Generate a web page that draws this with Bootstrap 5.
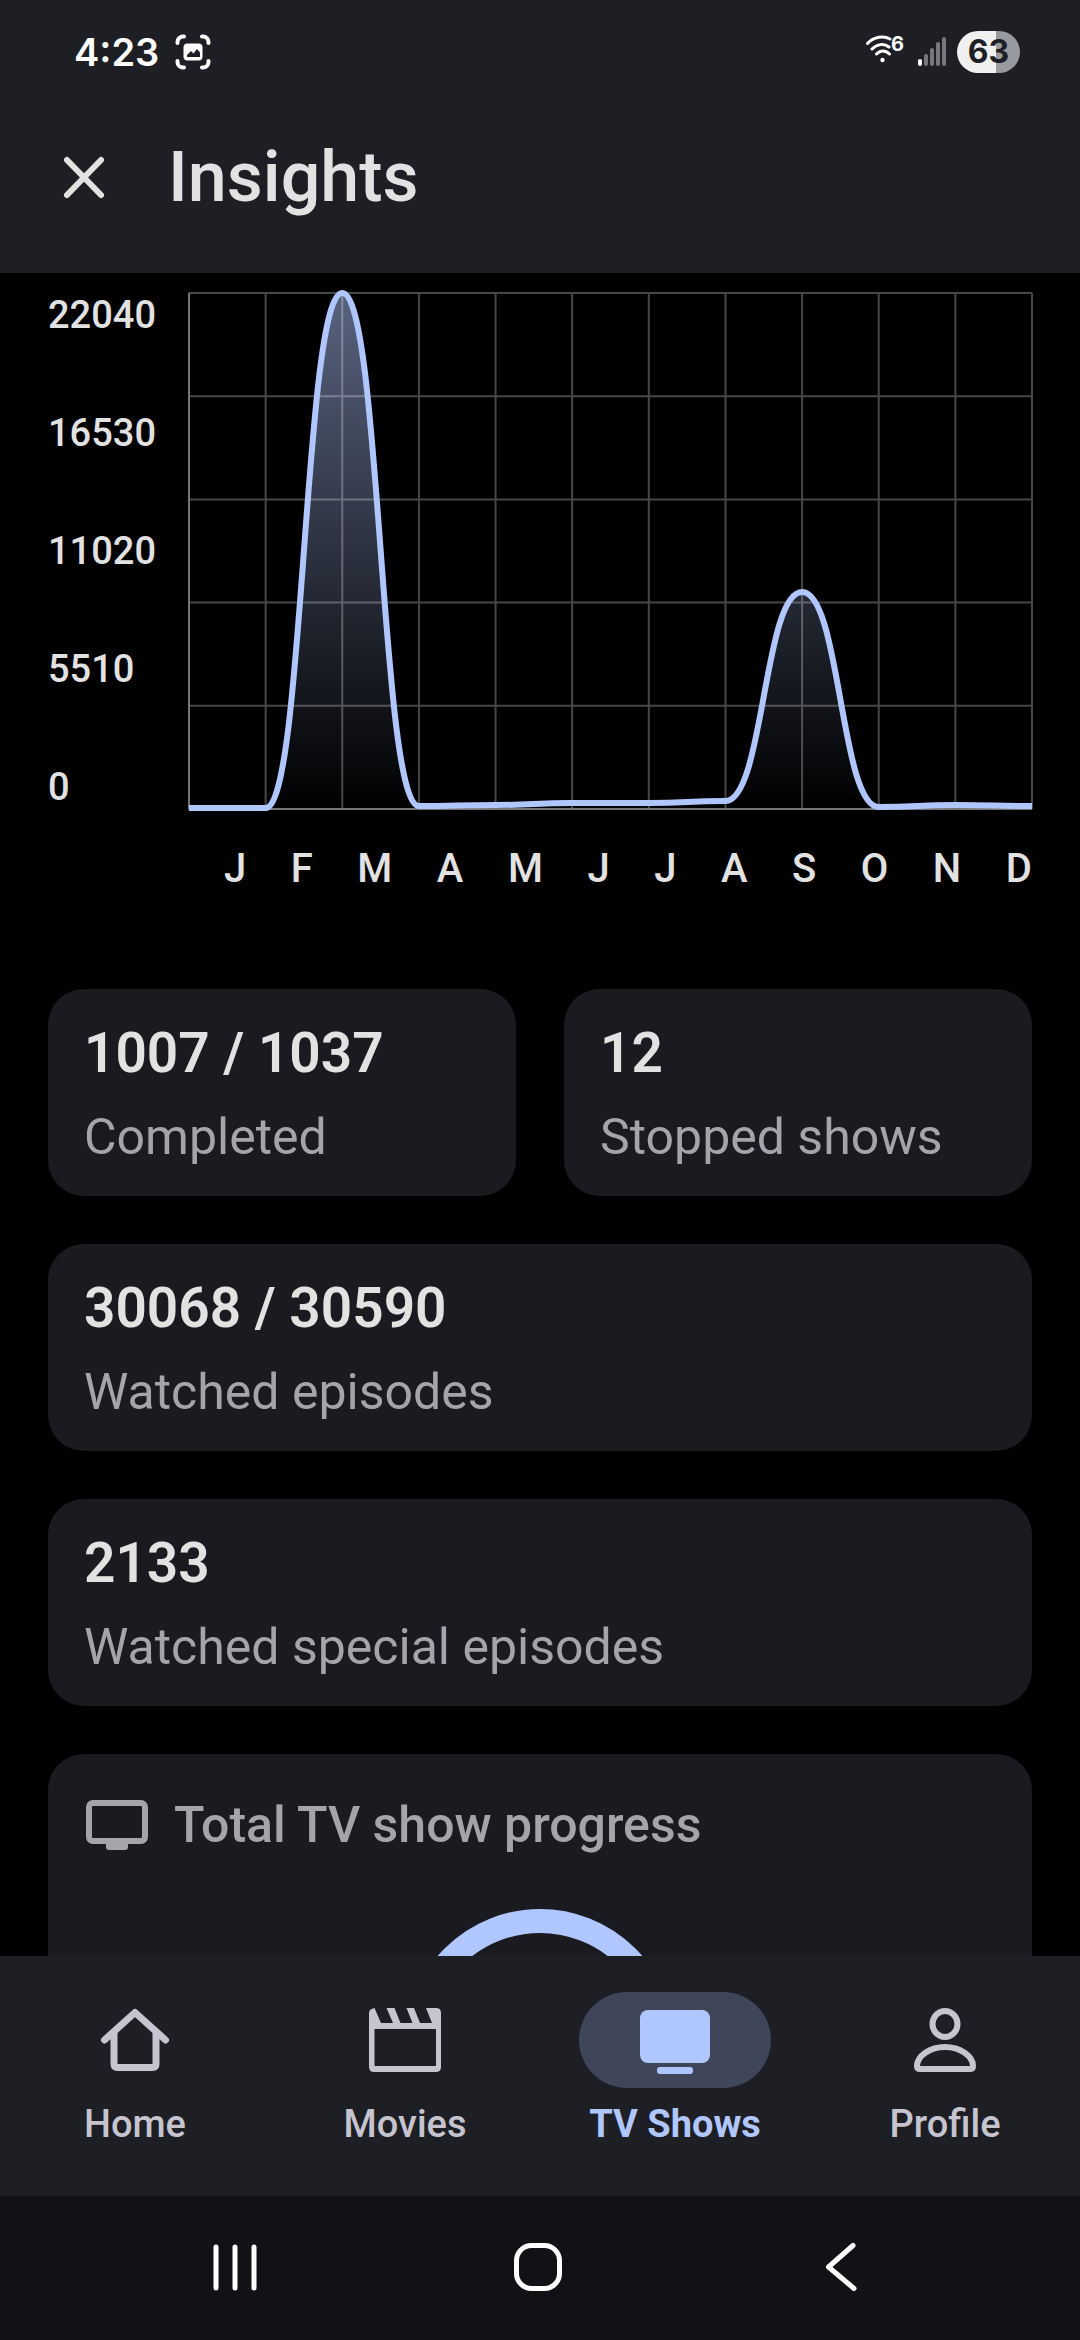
<!DOCTYPE html>
<html lang="en">
<head>
<meta charset="utf-8">
<meta name="viewport" content="width=device-width, initial-scale=1">
<title>Insights</title>
<link href="https://cdn.jsdelivr.net/npm/bootstrap@5.3.0/dist/css/bootstrap.min.css" rel="stylesheet">
<style>
  :root { --accent: #b0c6ff; --bar: #1e1f25; --panel: #1a1b20; --ink: #e2e2e2; --soft: #a4a4ab; --idle: #c5c4cf; }
  body { font-family: Roboto, "Noto Sans", sans-serif; background: #000; color: var(--ink); height: 100vh; }
  svg { display: block; flex: none; }
  .top-area { background: var(--bar); padding-bottom: 24px; }
  .status-row { height: 104px; padding: 0 60px 0 74px; color: #fff; font-family: Inter, sans-serif; }
  .clock { font-size: 38px; line-height: 44px; font-weight: 600; }
  .battery { width: 63px; height: 42px; border-radius: 21px; background: linear-gradient(90deg, #f0f0f1 62%, #999a9e 62%); color: #1e1f25; font-size: 32px; font-weight: 700; }
  .tool-row { height: 145px; padding: 0 54px; gap: 54px; }
  .close-btn { color: var(--ink); line-height: 0; }
  .page-title { font-size: 70px; line-height: 84px; font-weight: 500; }
  .scroll-area { min-height: 0; padding: 20px 48px 0; }
  .chart-row { height: 516px; }
  .y-axis { width: 141px; font-size: 38px; line-height: 44px; font-weight: 500; }
  .plot { flex: 1 1 0; min-width: 0; height: 100%; overflow: visible; }
  .x-axis { margin: 36px 0 96px 141px; padding-left: 35px; font-size: 40px; line-height: 48px; font-weight: 500; }
  .stat-grid { --bs-gutter-x: 48px; --bs-gutter-y: 48px; }
  .panel { background: var(--panel); border: 0; border-radius: 36px; color: var(--ink); }
  .stat-panel { padding: 28px 36px 23px; gap: 12px; }
  .stat-value { font-size: 55px; line-height: 72px; font-weight: 600; }
  .stat-label { font-size: 50px; line-height: 72px; color: var(--soft); }
  .ring-panel { padding: 35px 36px; gap: 48px; min-height: 480px; }
  .ring-head { font-size: 50px; line-height: 72px; font-weight: 500; color: var(--soft); gap: 24px; }
  .tab-bar { background: var(--bar); height: 240px; padding-top: 36px; }
  .tab-link { color: var(--idle); font-size: 38px; line-height: 44px; font-weight: 500; gap: 14px; text-decoration: none; }
  .tab-link .pill { width: 192px; height: 96px; border-radius: 48px; }
  .tab-link.active { color: var(--accent); font-weight: 700; }
  .tab-link.active .pill { background: #40465a; }
  .system-bar { background: #111216; height: 144px; padding: 0 88px 0 84px; }
  .system-bar .btn { color: #fff; }
</style>
<script src="https://cdn.jsdelivr.net/npm/bootstrap@5.3.0/dist/js/bootstrap.bundle.min.js"></script>
</head>
<body class="d-flex flex-column overflow-hidden">

<header class="top-area flex-shrink-0">
  <div class="status-row d-flex align-items-center justify-content-between">
    <div class="d-flex align-items-center gap-3">
      <span class="clock">4:23</span>
      <svg width="36" height="36" viewBox="0 0 36 36" fill="none" stroke="#fff" stroke-width="4" stroke-linecap="round">
        <path d="M2.500 9V8A5.500 5.500 0 0 1 8 2.500H9M27 2.500h1A5.500 5.500 0 0 1 33.500 8v1M33.500 27v1a5.500 5.500 0 0 1-5.500 5.500h-1M9 33.500H8A5.500 5.500 0 0 1 2.500 28v-1"/>
        <rect x="8.500" y="9.500" width="19" height="17" rx="4" fill="#fff" stroke="none"/>
        <path d="M12 23v-2l4-4 2.500 2.500 3.500-4.500 3 3.500V23z" fill="#1e1f25" stroke="none"/>
      </svg>
    </div>
    <div class="d-flex align-items-center">
      <svg width="91" height="42" viewBox="0 0 91 42" fill="none" stroke="#fff" stroke-width="3" stroke-linecap="round">
        <path d="M1.500 12.500C8 5.500 18 4.500 24 8M6 18c5-5 12-6 17-2M10.500 23c4-4 9-4 13 0"/>
        <circle cx="16.500" cy="29" r="2.200" fill="#fff" stroke="none"/>
        <text x="25" y="20" fill="#fff" stroke="none" font-size="20" font-weight="700" font-family="Inter, sans-serif">6</text>
        <g stroke-width="4"><path d="M54 30v3"/><path d="M60 25v8M66 19v14M72 13v20M78 8v25" stroke="#77787c"/></g>
      </svg>
      <span class="battery d-flex align-items-center justify-content-center">63</span>
    </div>
  </div>
  <div class="tool-row d-flex align-items-center">
    <button type="button" class="btn close-btn border-0 p-0" aria-label="Close">
      <svg width="60" height="60" viewBox="0 0 60 60" stroke="currentColor" stroke-width="6" stroke-linecap="round"><path d="M13 13l34 35M47 13L13 48"/></svg>
    </button>
    <h1 class="page-title mb-0">Insights</h1>
  </div>
</header>

<main class="scroll-area flex-fill overflow-hidden">
  <section aria-label="Episodes per month">
    <div class="chart-row d-flex">
      <div class="y-axis d-flex flex-column justify-content-between">
        <span>22040</span><span>16530</span><span>11020</span><span>5510</span><span>0</span>
      </div>
      <svg class="plot" viewBox="0 0 843 516" preserveAspectRatio="none" fill="none">
        <defs>
          <linearGradient id="fade" gradientUnits="userSpaceOnUse" x1="0" y1="0" x2="0" y2="516">
            <stop offset="0" stop-color="#b0c6ff" stop-opacity=".5"/><stop offset="1" stop-color="#b0c6ff" stop-opacity="0"/>
          </linearGradient>
        </defs>
        <path id="area" fill="url(#fade)"/>
        <path id="grid" stroke="#fff" stroke-opacity=".28" stroke-width="2"/>
        <path d="M0 0V516H843" stroke="#fff" stroke-opacity=".25" stroke-width="2"/>
        <path id="curve" stroke="#b0c6ff" stroke-width="6" stroke-linejoin="round"/>
      </svg>
    </div>
    <div class="x-axis d-flex justify-content-between">
      <span>J</span><span>F</span><span>M</span><span>A</span><span>M</span><span>J</span><span>J</span><span>A</span><span>S</span><span>O</span><span>N</span><span>D</span>
    </div>
  </section>

  <section class="row stat-grid mt-0">
    <div class="col-6 mt-0"><div class="card panel stat-panel"><div class="stat-value">1007 / 1037</div><div class="stat-label">Completed</div></div></div>
    <div class="col-6 mt-0"><div class="card panel stat-panel"><div class="stat-value">12</div><div class="stat-label">Stopped shows</div></div></div>
    <div class="col-12"><div class="card panel stat-panel"><div class="stat-value">30068 / 30590</div><div class="stat-label">Watched episodes</div></div></div>
    <div class="col-12"><div class="card panel stat-panel"><div class="stat-value">2133</div><div class="stat-label">Watched special episodes</div></div></div>
    <div class="col-12">
      <div class="card panel ring-panel">
        <div class="ring-head d-flex align-items-center">
          <svg width="66" height="54" viewBox="0 0 66 54"><rect x="5" y="5" width="56" height="38" rx="4" fill="none" stroke="currentColor" stroke-width="6"/><path d="M22 45h22v4q0 3-3 3H25q-3 0-3-3z" fill="currentColor"/></svg>
          <span>Total TV show progress</span>
        </div>
        <svg class="mx-auto" width="270" height="270" viewBox="0 0 270 270"><circle cx="135" cy="135" r="123" fill="none" stroke="#b0c6ff" stroke-width="24"/></svg>
      </div>
    </div>
  </section>
</main>

<nav class="tab-bar d-flex align-items-start flex-shrink-0">
  <a href="#" class="tab-link d-flex flex-column align-items-center w-25">
    <span class="pill d-flex align-items-center justify-content-center">
      <svg width="96" height="96" viewBox="0 0 96 96" fill="none" stroke="currentColor" stroke-width="7" stroke-linejoin="round" stroke-linecap="round"><path d="M17.500 48L48 20.500 78.500 48"/><path d="M27 41v31q0 3.500 3.500 3.500h35q3.500 0 3.500-3.500V41"/></svg>
    </span>Home</a>
  <a href="#" class="tab-link d-flex flex-column align-items-center w-25">
    <span class="pill d-flex align-items-center justify-content-center">
      <svg width="96" height="96" viewBox="0 0 96 96" fill="currentColor" fill-rule="evenodd"><path d="M17.500 16L24 31H36L29.500 16H37.500L43.500 31H55.500L49.500 16H57L63 31H75L69 16H79Q84 16 84 21V75Q84 80 79 80H17Q12 80 12 75V21Q12 17 17.500 16ZM17.500 37V74H79V37Z"/></svg>
    </span>Movies</a>
  <a href="#" class="tab-link active d-flex flex-column align-items-center w-25" aria-current="page">
    <span class="pill d-flex align-items-center justify-content-center">
      <svg width="96" height="96" viewBox="0 0 96 96" fill="currentColor"><rect x="13" y="18" width="70" height="53" rx="8"/><rect x="30" y="75" width="36" height="7" rx="3"/></svg>
    </span>TV Shows</a>
  <a href="#" class="tab-link d-flex flex-column align-items-center w-25">
    <span class="pill d-flex align-items-center justify-content-center">
      <svg width="96" height="96" viewBox="0 0 96 96" fill="none" stroke="currentColor" stroke-width="6"><ellipse cx="48" cy="32" rx="12.500" ry="13"/><path d="M20 74C20 64 33 55 48 55S76 64 76 74Q76 77 73 77H23Q20 77 20 74Z"/></svg>
    </span>Profile</a>
</nav>

<footer class="system-bar d-flex align-items-center flex-shrink-0">
  <button type="button" class="btn border-0 p-0 flex-fill d-flex justify-content-center" aria-label="Recent apps">
    <svg width="60" height="60" viewBox="0 0 60 60" stroke="currentColor" stroke-width="5" stroke-linecap="round"><path d="M11 9v41M30 9v41M49 9v41"/></svg></button>
  <button type="button" class="btn border-0 p-0 flex-fill d-flex justify-content-center" aria-label="Home">
    <svg width="60" height="60" viewBox="0 0 60 60" fill="none" stroke="currentColor" stroke-width="5"><rect x="8.500" y="7.500" width="43" height="43" rx="15"/></svg></button>
  <button type="button" class="btn border-0 p-0 flex-fill d-flex justify-content-center" aria-label="Back">
    <svg width="60" height="60" viewBox="0 0 60 60" fill="none" stroke="currentColor" stroke-width="5" stroke-linecap="round" stroke-linejoin="round"><path d="M42 7.500L17.500 29 43 50.500"/></svg></button>
</footer>

<script>
  // Plot height of each month's point, January to December
  const months = [515, 515, 0, 513, 512, 510, 510, 508, 299, 514, 512, 513];
  const step = 843 / 11;
  let line = `M0 ${months[0]}`;
  for (let i = 1; i < months.length; i++) {
    const mid = (i - 0.5) * step;
    line += `C${mid} ${months[i - 1]} ${mid} ${months[i]} ${i * step} ${months[i]}`;
  }
  let grid = '';
  for (let i = 0; i <= 11; i++) grid += `M${i * step} 0V516`;
  for (let i = 0; i <= 5; i++) grid += `M0 ${i * 103.2}H843`;
  document.getElementById('curve').setAttribute('d', line);
  document.getElementById('area').setAttribute('d', line + 'V516H0Z');
  document.getElementById('grid').setAttribute('d', grid);
</script>
</body>
</html>
